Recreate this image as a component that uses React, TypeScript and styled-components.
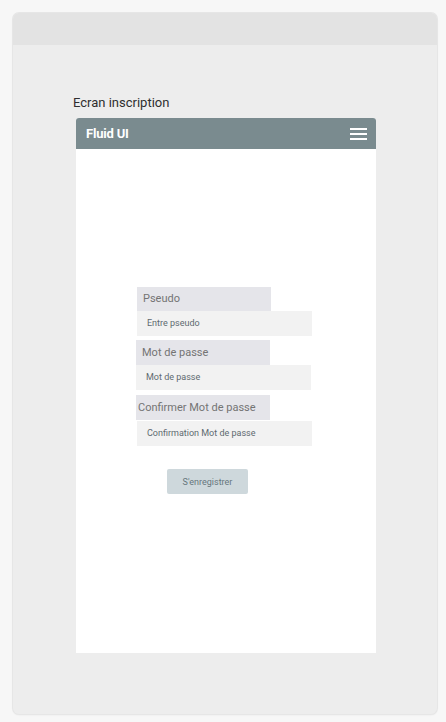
import React from "react";
import styled, { createGlobalStyle } from "styled-components";

const Global = createGlobalStyle`
  html, body { margin: 0; padding: 0; background: #f7f7f7; }
  body { font-family: Roboto, "Liberation Sans", Arial, sans-serif; }
`;

const Page = styled.div`
  padding: 13px 9px 8px 13px;
  height: 722px;
  box-sizing: border-box;
`;

const Card = styled.div`
  width: 424px;
  height: 701px;
  background: #ededed;
  border-radius: 6px;
  box-shadow: 0 0 0 1px #e6e6e6, 0 1px 2px rgba(0, 0, 0, 0.08);
  overflow: hidden;
  display: flex;
  flex-direction: column;
`;

const CardHeader = styled.div`
  height: 32px;
  background: #e3e3e3;
  flex: none;
`;

const CardBody = styled.div`
  padding: 50px 0 0 60px;
  display: flex;
  flex-direction: column;
`;

const ScreenTitle = styled.div`
  font-size: 13px;
  color: #2f2f2f;
  line-height: 16px;
  height: 23px;
`;

const Phone = styled.div`
  margin-left: 3px;
  width: 300px;
  height: 535px;
  background: #ffffff;
  border-radius: 3px 3px 0 0;
  display: flex;
  flex-direction: column;
`;

const AppBar = styled.div`
  height: 31px;
  background: #7a8b8f;
  border-radius: 3px 3px 0 0;
  display: flex;
  align-items: center;
  justify-content: space-between;
  padding: 0 9px 0 10px;
  flex: none;
`;

const AppTitle = styled.div`
  color: #ffffff;
  font-weight: 700;
  font-size: 13px;
  letter-spacing: -0.2px;
`;

const Burger = styled.div`
  width: 17px;
  display: flex;
  flex-direction: column;
  gap: 3px;
  margin-top: 1px;
  span {
    display: block;
    height: 2px;
    background: #ffffff;
  }
`;

const Form = styled.div`
  padding: 138px 0 0 60px;
  display: flex;
  flex-direction: column;
`;

const Field = styled.div<{ $top: number; $shift: number }>`
  margin-top: ${(p) => p.$top}px;
  margin-left: ${(p) => p.$shift}px;
  display: flex;
  flex-direction: column;
`;

const FieldLabel = styled.div<{ $pad: number; $h: number }>`
  width: 134px;
  height: ${(p) => p.$h}px;
  box-sizing: border-box;
  background: #e5e5ea;
  color: #747474;
  font-size: 11px;
  line-height: ${(p) => p.$h}px;
  padding-left: ${(p) => p.$pad}px;
  white-space: nowrap;
`;

const FieldInput = styled.div<{ $shift: number; $gap: number }>`
  margin: ${(p) => p.$gap}px 0 0 ${(p) => p.$shift}px;
  width: 175px;
  height: 25px;
  box-sizing: border-box;
  background: #f2f2f2;
  color: #5e6a70;
  font-size: 9px;
  line-height: 25px;
  padding-left: 10px;
`;

const Submit = styled.button`
  margin: 23px 0 0 31px;
  width: 81px;
  height: 25px;
  border: none;
  border-radius: 2px;
  background: #ced8dc;
  color: #66767c;
  font-family: Roboto, "Liberation Sans", Arial, sans-serif;
  font-size: 9px;
  padding: 0;
`;

const fields = [
  { label: "Pseudo", placeholder: "Entre pseudo", top: 0, shift: 1, pad: 6, h: 24, inShift: 0, gap: 0 },
  { label: "Mot de passe", placeholder: "Mot de passe", top: 4, shift: 0, pad: 6, h: 25, inShift: 0, gap: 0 },
  { label: "Confirmer Mot de passe", placeholder: "Confirmation Mot de passe", top: 5, shift: 0, pad: 2, h: 25, inShift: 1, gap: 1 },
];

export default function App() {
  return (
    <>
      <Global />
      <Page>
        <Card>
          <CardHeader />
          <CardBody>
            <ScreenTitle>Ecran inscription</ScreenTitle>
            <Phone>
              <AppBar>
                <AppTitle>Fluid UI</AppTitle>
                <Burger>
                  <span />
                  <span />
                  <span />
                </Burger>
              </AppBar>
              <Form>
                {fields.map((f) => (
                  <Field key={f.label} $top={f.top} $shift={f.shift}>
                    <FieldLabel $pad={f.pad} $h={f.h}>{f.label}</FieldLabel>
                    <FieldInput $shift={f.inShift} $gap={f.gap}>{f.placeholder}</FieldInput>
                  </Field>
                ))}
                <Submit>S'enregistrer</Submit>
              </Form>
            </Phone>
          </CardBody>
        </Card>
      </Page>
    </>
  );
}
